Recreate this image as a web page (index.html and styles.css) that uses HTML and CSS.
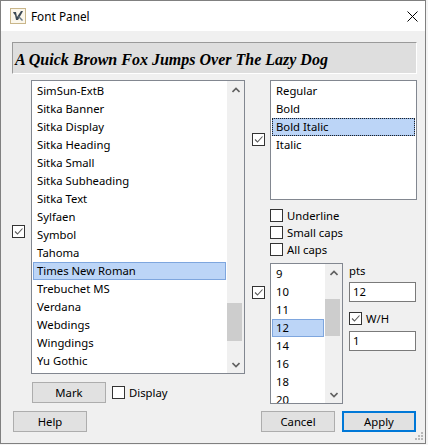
FILE: index.html
```html
<!DOCTYPE html>
<html>
<head>
<meta charset="utf-8">
<link rel="stylesheet" href="styles.css">
</head>
<body>
<div class="window">
  <div class="titlebar">
    <svg class="app-icon" width="16" height="16" viewBox="0 0 16 16">
      <rect x="0.5" y="0.5" width="15" height="15" fill="#fbf7ec" stroke="#c9b68a"/>
      <path d="M3 4 L6 4 L7 9 L11 3 L13 3 L12 5 L8 12 L6 12 L5 7 L4 6 Z" fill="#3d4a55"/>
      <path d="M9 8 L13 12 L12 13 L8 9 Z" fill="#6b7a86"/>
    </svg>
    <span class="title">Font Panel</span>
    <svg class="close" width="11" height="11" viewBox="0 0 11 11">
      <path d="M0.5 0.5 L10.5 10.5 M10.5 0.5 L0.5 10.5" stroke="#000" stroke-width="1" fill="none"/>
    </svg>
  </div>
  <div class="content">
    <div class="preview">A Quick Brown Fox Jumps Over The Lazy Dog</div>
    <div class="main">
      <div class="left">
        <div class="font-row">
          <span class="cb checked cb-font"><svg viewBox="0 0 11 11"><path d="M2 5.5 L4.5 8 L9.5 2.5"/></svg></span>
          <div class="listbox font-list">
            <ul class="items">
              <li>SimSun-ExtB</li>
              <li>Sitka Banner</li>
              <li>Sitka Display</li>
              <li>Sitka Heading</li>
              <li>Sitka Small</li>
              <li>Sitka Subheading</li>
              <li>Sitka Text</li>
              <li>Sylfaen</li>
              <li>Symbol</li>
              <li>Tahoma</li>
              <li class="sel">Times New Roman</li>
              <li>Trebuchet MS</li>
              <li>Verdana</li>
              <li>Webdings</li>
              <li>Wingdings</li>
              <li>Yu Gothic</li>
            </ul>
            <div class="scrollbar">
              <div class="sb-btn"><svg width="8" height="6" viewBox="0 0 8 6"><path d="M0.5 5 L4 1.5 L7.5 5" stroke="#606060" stroke-width="1.6" fill="none"/></svg></div>
              <div class="track"><div class="thumb thumb-font"></div></div>
              <div class="sb-btn"><svg width="8" height="6" viewBox="0 0 8 6"><path d="M0.5 1 L4 4.5 L7.5 1" stroke="#606060" stroke-width="1.6" fill="none"/></svg></div>
            </div>
          </div>
        </div>
        <div class="mark-row">
          <button class="btn">Mark</button>
          <label class="check"><span class="cb"></span>Display</label>
        </div>
      </div>
      <div class="right">
        <div class="style-row">
          <span class="cb checked cb-style"><svg viewBox="0 0 11 11"><path d="M2 5.5 L4.5 8 L9.5 2.5"/></svg></span>
          <div class="listbox style-list">
            <ul class="items">
              <li>Regular</li>
              <li>Bold</li>
              <li class="sel focus">Bold Italic</li>
              <li>Italic</li>
            </ul>
          </div>
        </div>
        <div class="effects">
          <label class="check"><span class="cb"></span>Underline</label>
          <label class="check"><span class="cb"></span>Small caps</label>
          <label class="check"><span class="cb"></span>All caps</label>
        </div>
        <div class="size-row">
          <span class="cb checked cb-size"><svg viewBox="0 0 11 11"><path d="M2 5.5 L4.5 8 L9.5 2.5"/></svg></span>
          <div class="listbox size-list">
            <ul class="items">
              <li>9</li>
              <li>10</li>
              <li>11</li>
              <li class="sel">12</li>
              <li>14</li>
              <li>16</li>
              <li>18</li>
              <li>20</li>
            </ul>
            <div class="scrollbar">
              <div class="sb-btn"><svg width="8" height="6" viewBox="0 0 8 6"><path d="M0.5 5 L4 1.5 L7.5 5" stroke="#606060" stroke-width="1.6" fill="none"/></svg></div>
              <div class="track"><div class="thumb thumb-size"></div></div>
              <div class="sb-btn"><svg width="8" height="6" viewBox="0 0 8 6"><path d="M0.5 1 L4 4.5 L7.5 1" stroke="#606060" stroke-width="1.6" fill="none"/></svg></div>
            </div>
          </div>
          <div class="side">
            <div class="pts">pts</div>
            <div class="field">12</div>
            <label class="check wh"><span class="cb checked"><svg viewBox="0 0 11 11"><path d="M2 5.5 L4.5 8 L9.5 2.5"/></svg></span>W/H</label>
            <div class="field field-ratio">1</div>
          </div>
        </div>
      </div>
    </div>
    <div class="footer">
      <button class="btn help">Help</button>
      <div class="actions">
        <button class="btn">Cancel</button>
        <button class="btn default">Apply</button>
      </div>
    </div>
  </div>
  <svg class="grip" width="9" height="9" viewBox="0 0 9 9">
    <rect x="7" y="0" width="2" height="2" fill="#b8b8b8"/>
    <rect x="4" y="3" width="2" height="2" fill="#b8b8b8"/>
    <rect x="7" y="3" width="2" height="2" fill="#b8b8b8"/>
    <rect x="1" y="6" width="2" height="2" fill="#b8b8b8"/>
    <rect x="4" y="6" width="2" height="2" fill="#b8b8b8"/>
    <rect x="7" y="6" width="2" height="2" fill="#b8b8b8"/>
  </svg>
</div>
</body>
</html>
```

FILE: styles.css
```css
* { box-sizing: border-box; }
html, body { margin: 0; padding: 0; background: #f4f4f4; }
body {
  font-family: "Segoe UI", "Noto Sans", sans-serif;
  font-size: 11.3px;
  color: #000;
}
.window {
  position: relative;
  width: 426px;
  height: 444px;
  border: 1px solid #808080;
  background: #f0f0f0;
}
.titlebar {
  height: 30px;
  background: #fff;
  display: flex;
  align-items: center;
  padding-left: 9px;
}
.app-icon { display: block; }
.title { margin-left: 5px; font-size: 11.8px; }
.close { margin-left: auto; margin-right: 7px; }
.content {
  padding: 11px 8px 0 11px;
}
.preview {
  height: 32px;
  background: #dedede;
  border-top: 1px solid #9a9a9a;
  border-left: 1px solid #9a9a9a;
  border-right: 1px solid #fff;
  border-bottom: 1px solid #fff;
  font-family: "Liberation Serif", "Times New Roman", serif;
  font-weight: bold;
  font-style: italic;
  font-size: 16px;
  line-height: 33px;
  padding-left: 2px;
  white-space: nowrap;
  overflow: hidden;
}
.main {
  display: flex;
  margin-top: 6px;
  gap: 7px;
}
.left { width: 233px; }
.right { width: 165px; }
.font-row { display: flex; gap: 6px; }
.style-row { display: flex; gap: 5px; }
.size-row { display: flex; margin-top: 5px; }
.cb {
  flex: none;
  width: 13px;
  height: 13px;
  border: 1px solid #333;
  background: #fff;
  display: inline-block;
}
.cb svg { display: block; width: 11px; height: 11px; }
.cb svg path { fill: none; stroke: #5a5a5a; stroke-width: 1.1; }
.cb-font { margin-top: 145px; }
.cb-style { margin-top: 53px; }
.cb-size { margin-top: 23px; margin-right: 5px; }
.listbox {
  border: 1px solid #828790;
  background: #fff;
  display: flex;
  overflow: hidden;
}
.font-list { width: 214px; height: 294px; }
.style-list { width: 147px; height: 120px; }
.size-list { width: 73px; height: 141px; margin-right: 6px; }
.items {
  list-style: none;
  margin: 0;
  padding: 1px 0 0 0;
  flex: 1;
  min-width: 0;
}
.items li {
  height: 18px;
  line-height: 16px;
  margin: 0 1px;
  border: 1px solid transparent;
  padding-left: 3px;
  white-space: nowrap;
}
.items li.sel {
  background: #bcd5f7;
  border-color: #7ea6de;
}
.items li.focus {
  outline: 1px dotted #222;
  outline-offset: -1px;
}
.scrollbar {
  width: 17px;
  background: #f0f0f0;
  display: flex;
  flex-direction: column;
  flex: none;
}
.sb-btn {
  height: 17px;
  display: flex;
  align-items: center;
  justify-content: center;
}
.sb-btn svg { display: block; }
.track { flex: 1; }
.thumb { width: 15px; background: #cdcdcd; }
.thumb-font { margin-top: 205px; height: 38px; }
.thumb-size { margin-top: 18px; height: 37px; }
.check {
  display: flex;
  align-items: center;
  gap: 4px;
  height: 17px;
  white-space: nowrap;
}
.effects {
  margin-left: 18px;
  margin-top: 7px;
}
.mark-row {
  display: flex;
  align-items: center;
  margin-left: 20px;
  margin-top: 8px;
  gap: 6px;
}
.btn {
  font-family: "Segoe UI", "Noto Sans", sans-serif;
  font-size: 11.3px;
  width: 74px;
  height: 21px;
  background: #e1e1e1;
  border: 1px solid #adadad;
  padding: 0;
  color: #000;
  line-height: 17px;
}
.btn.default { border: 2px solid #0078d7; }
.side { width: 67px; }
.pts { height: 16px; line-height: 16px; }
.field {
  height: 20px;
  border: 1px solid #7a7a7a;
  background: #fff;
  padding-left: 3px;
  line-height: 17px;
  margin-top: 3px;
}
.wh { margin-top: 8px; }
.field-ratio { margin-top: 4px; }
.footer {
  display: flex;
  justify-content: space-between;
  margin-top: 7px;
  padding-left: 1px;
  padding-right: 1px;
}
.actions { display: flex; gap: 7px; }
.grip {
  position: absolute;
  right: 2px;
  bottom: 2px;
}
```
